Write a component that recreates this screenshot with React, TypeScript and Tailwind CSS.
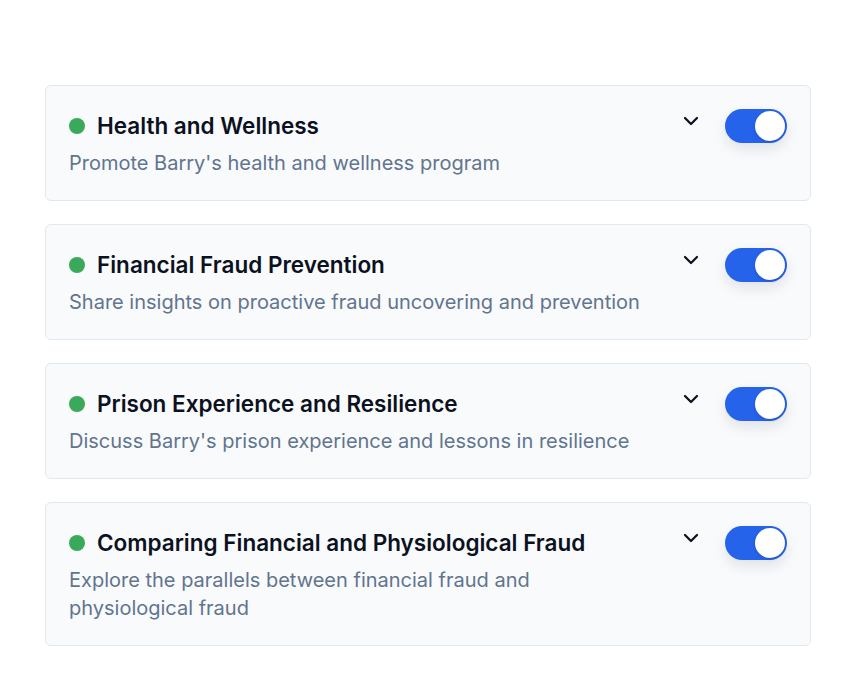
import React, { useState } from 'react';
import { ChevronDown } from 'lucide-react';

const topics = [
  {
    title: 'Health and Wellness',
    description: "Promote Barry's health and wellness program",
  },
  {
    title: 'Financial Fraud Prevention',
    description: 'Share insights on proactive fraud uncovering and prevention',
  },
  {
    title: 'Prison Experience and Resilience',
    description: "Discuss Barry's prison experience and lessons in resilience",
  },
  {
    title: 'Comparing Financial and Physiological Fraud',
    description: 'Explore the parallels between financial fraud and physiological fraud',
  },
];

function Toggle({ on, onChange }: { on: boolean; onChange: () => void }) {
  return (
    <button
      onClick={onChange}
      className={`flex h-[34px] w-[62px] shrink-0 items-center rounded-full p-[2px] shadow-[0_6px_14px_rgba(15,23,42,0.10)] transition-colors ${
        on ? 'justify-end bg-[#2563eb]' : 'justify-start bg-slate-300'
      }`}
    >
      <span className="block h-[30px] w-[30px] rounded-full bg-white shadow-[0_1px_3px_rgba(15,23,42,0.2)]" />
    </button>
  );
}

function TopicCard({ title, description }: { title: string; description: string }) {
  const [enabled, setEnabled] = useState(true);
  return (
    <div className="flex items-start justify-between gap-6 rounded-md border border-slate-200 bg-slate-50 p-[23px]">
      <div className="flex max-w-[600px] flex-col">
        <div className="flex h-[34px] items-center gap-3">
          <span className="h-4 w-4 shrink-0 rounded-full bg-[#3aa95a]" />
          <h3 className="text-[22.5px] font-semibold leading-7 text-[#0b1120]">{title}</h3>
        </div>
        <p className="mt-[6px] text-[20px] leading-7 text-slate-500">{description}</p>
      </div>
      <div className="flex items-start gap-[22px]">
        <ChevronDown className="h-6 w-6 text-[#0b1120]" strokeWidth={2.25} />
        <Toggle on={enabled} onChange={() => setEnabled(!enabled)} />
      </div>
    </div>
  );
}

export default function App() {
  return (
    <div className="min-h-screen bg-white font-['Inter',sans-serif]">
      <div className="ml-[45px] flex w-[766px] flex-col gap-[23px] pt-[85px] pb-10">
        {topics.map((t) => (
          <TopicCard key={t.title} title={t.title} description={t.description} />
        ))}
      </div>
    </div>
  );
}
